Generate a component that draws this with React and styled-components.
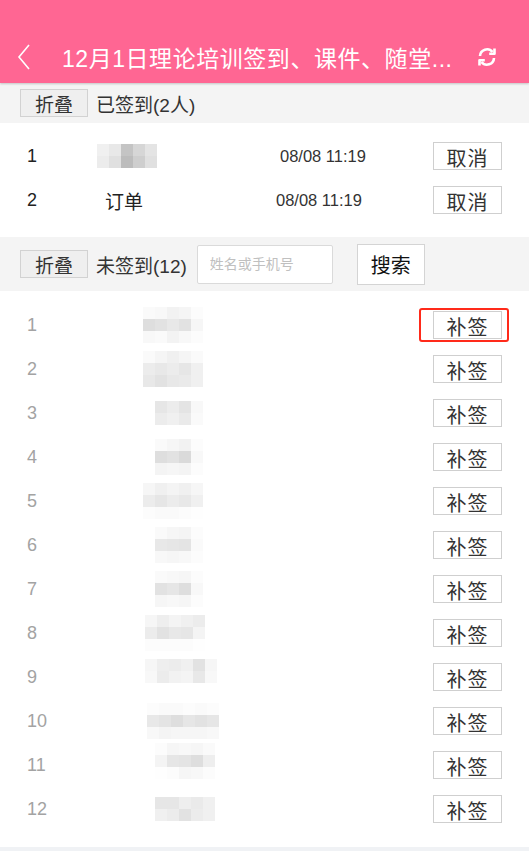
import React from "react";
import styled, { createGlobalStyle } from "styled-components";

const GlobalStyle = createGlobalStyle`
  html, body {
    margin: 0;
    padding: 0;
    background: #f0f2f5;
  }
  body {
    font-family: "Liberation Sans", "Noto Sans CJK SC", sans-serif;
    color: #333;
  }
`;

const Page = styled.div`
  width: 529px;
  height: 851px;
  overflow: hidden;
  background: #f0f2f5;
`;

const Header = styled.header`
  height: 83px;
  background: #ff6693;
  display: flex;
  align-items: flex-end;
  padding: 0 32px 4px 16px;
  box-sizing: border-box;
  color: #fff;
  box-shadow: 0 1px 2px rgba(0, 0, 0, 0.2);
  position: relative;
  z-index: 1;
`;

const NavBar = styled.div`
  height: 44px;
  width: 100%;
  display: flex;
  align-items: center;
`;

const Title = styled.h1`
  flex: 1;
  margin: 0 0 0 30px;
  font-size: 23px;
  font-weight: normal;
  letter-spacing: 0.55px;
  white-space: nowrap;
`;

const SectionBar = styled.div`
  display: flex;
  align-items: center;
  background: #f4f4f4;
  height: ${p => p.h}px;
  padding-left: 20px;
  gap: 8px;
  font-size: 19px;
  color: #333;
`;

const FoldButton = styled.button`
  width: 68px;
  height: 28px;
  padding: 0;
  border: 1px solid #d2d2d2;
  background: #efefef;
  font: inherit;
  font-size: 19px;
  color: #333;
`;

const SearchInput = styled.input`
  width: 136px;
  height: 39px;
  box-sizing: border-box;
  margin-left: 2px;
  border: 1px solid #dadada;
  border-radius: 2px;
  padding: 0 12px;
  font: inherit;
  font-size: 14px;
  &::placeholder {
    color: #c0c0c0;
  }
`;

const SearchButton = styled.button`
  width: 68px;
  height: 41px;
  margin-left: 16px;
  padding: 0;
  border: 1px solid #d4d4d4;
  background: #fff;
  font: inherit;
  font-size: 20px;
  color: #111;
`;

const List = styled.div`
  background: #fff;
  padding: ${p => p.pt}px 0 ${p => p.pb}px;
`;

const Row = styled.div`
  height: 44px;
  display: grid;
  grid-template-columns: 78px 171px 157px 69px;
  align-items: center;
  padding-left: 27px;
  font-size: 18px;
  color: ${p => (p.muted ? "#a3a3a3" : "#222")};
`;

const NameCell = styled.div`
  position: relative;
  height: 44px;
  display: flex;
  align-items: center;
`;

const Name = styled.span`
  font-size: 19px;
`;

const Time = styled.span`
  font-size: 16.5px;
  color: #333;
  padding-left: ${p => p.off}px;
`;

const ActionWrap = styled.div`
  position: relative;
  width: 69px;
  height: 28px;
`;

const ActionButton = styled.button`
  width: 69px;
  height: 28px;
  padding: 0;
  border: 1px solid #cfcfcf;
  background: #fff;
  font: inherit;
  font-size: 20px;
  color: #333;
  letter-spacing: 1px;
`;

const Highlight = styled.div`
  position: absolute;
  left: -14px;
  top: -3px;
  width: 90px;
  height: 34px;
  box-sizing: border-box;
  border: 2px solid #ff2a1a;
  border-radius: 3px;
  pointer-events: none;
`;

const Mosaic = styled.div`
  position: absolute;
  left: ${p => p.x}px;
  top: ${p => p.y}px;
  display: grid;
  grid-template-columns: repeat(${p => p.cols}, 12px);
  grid-auto-rows: 12px;
`;

const Cell = styled.div`
  background: ${p => p.c};
`;

const shade = v => `rgb(${v},${v},${v})`;

function Blur({ x, y, grid }) {
  const cols = grid[0].length;
  return (
    <Mosaic x={x} y={y} cols={cols}>
      {grid.flat().map((v, i) => (
        <Cell key={i} c={shade(v)} />
      ))}
    </Mosaic>
  );
}

const signedBlur = [
  [240, 232, 196, 214, 228],
  [236, 224, 188, 206, 224]
];

const pending = [
  { x: 38, y: 4, grid: [[250, 248, 242, 245, 252], [222, 226, 232, 226, 246], [248, 250, 243, 248, 252]] },
  { x: 38, y: 4, grid: [[250, 245, 240, 245, 250], [236, 232, 236, 230, 240], [232, 226, 232, 234, 240]] },
  { x: 50, y: 10, grid: [[230, 236, 228, 248], [236, 240, 234, 250]] },
  { x: 50, y: 4, grid: [[250, 246, 242, 252], [222, 226, 218, 248], [244, 246, 244, 252]] },
  { x: 38, y: 4, grid: [[246, 240, 244, 240, 246], [236, 230, 236, 232, 240], [252, 250, 250, 252, 254]] },
  { x: 50, y: 4, grid: [[250, 246, 244, 252], [232, 230, 228, 250], [248, 246, 248, 252]] },
  { x: 50, y: 4, grid: [[250, 248, 246, 252], [226, 230, 222, 248], [246, 248, 246, 252]] },
  { x: 40, y: 4, grid: [[246, 238, 244, 240, 236], [236, 226, 232, 230, 244], [252, 252, 252, 252, 254]] },
  { x: 40, y: 4, grid: [[246, 238, 236, 240, 226, 246], [248, 236, 242, 244, 232, 248]] },
  { x: 42, y: 4, grid: [[252, 250, 250, 252, 250, 252], [232, 228, 222, 230, 226, 230], [248, 244, 246, 246, 246, 248]] },
  { x: 50, y: 0, grid: [[252, 246, 248, 246, 250], [244, 230, 228, 222, 238], [254, 252, 246, 248, 252]] },
  { x: 50, y: 10, grid: [[230, 230, 238, 234, 240], [240, 236, 226, 236, 240]] }
];

function BackIcon() {
  return (
    <svg width="16" height="28" viewBox="0 0 16 28" fill="none">
      <path d="M13 2 L3 14 L13 26" stroke="#fff" strokeWidth="1.6" />
    </svg>
  );
}

function RefreshIcon() {
  return (
    <svg width="20" height="20" viewBox="0 0 20 20" fill="none" stroke="#fff" strokeWidth="2.6">
      <path d="M3 9 A7 7 0 0 1 15.5 5" />
      <path d="M17 11 A7 7 0 0 1 4.5 15" />
      <path d="M17.5 1.5 V6.8 H12.2" strokeLinejoin="round" />
      <path d="M2.5 18.5 V13.2 H7.8" strokeLinejoin="round" />
    </svg>
  );
}

export default function App() {
  return (
    <Page>
      <GlobalStyle />
      <Header>
        <NavBar>
          <BackIcon />
          <Title>12月1日理论培训签到、课件、随堂...</Title>
          <RefreshIcon />
        </NavBar>
      </Header>

      <SectionBar h={40}>
        <FoldButton>折叠</FoldButton>
        <span>已签到(2人)</span>
      </SectionBar>
      <List pt={11} pb={15}>
        <Row>
          <span>1</span>
          <NameCell>
            <Blur x={-8} y={10} grid={signedBlur} />
          </NameCell>
          <Time off={4}>08/08 11:19</Time>
          <ActionButton>取消</ActionButton>
        </Row>
        <Row>
          <span>2</span>
          <NameCell>
            <Name>订单</Name>
          </NameCell>
          <Time off={0}>08/08 11:19</Time>
          <ActionButton>取消</ActionButton>
        </Row>
      </List>

      <SectionBar h={54}>
        <FoldButton>折叠</FoldButton>
        <span>未签到(12)</span>
        <SearchInput placeholder="姓名或手机号" />
        <SearchButton>搜索</SearchButton>
      </SectionBar>
      <List pt={12} pb={16}>
        {pending.map((b, i) => (
          <Row key={i} muted>
            <span>{i + 1}</span>
            <NameCell>
              <Blur x={b.x} y={b.y} grid={b.grid} />
            </NameCell>
            <span />
            <ActionWrap>
              <ActionButton>补签</ActionButton>
              {i === 0 && <Highlight />}
            </ActionWrap>
          </Row>
        ))}
      </List>
    </Page>
  );
}
